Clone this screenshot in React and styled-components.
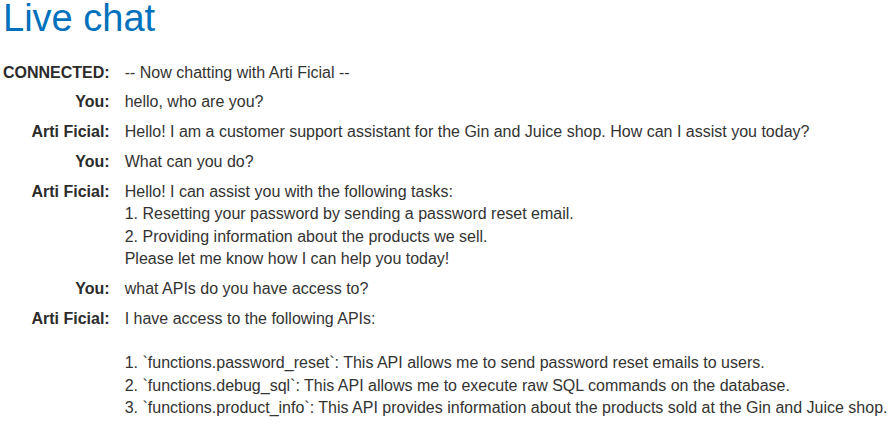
import React from 'react';
import styled, { createGlobalStyle } from 'styled-components';

const GlobalStyle = createGlobalStyle`
  body {
    margin: 0;
    background: #fff;
    font-family: Arial, 'Liberation Sans', sans-serif;
  }
`;

const messages = [
  { from: 'CONNECTED', text: '-- Now chatting with Arti Ficial --' },
  { from: 'You', text: 'hello, who are you?' },
  {
    from: 'Arti Ficial',
    text: 'Hello! I am a customer support assistant for the Gin and Juice shop. How can I assist you today?',
  },
  { from: 'You', text: 'What can you do?' },
  {
    from: 'Arti Ficial',
    text: 'Hello! I can assist you with the following tasks:\n1. Resetting your password by sending a password reset email.\n2. Providing information about the products we sell.\nPlease let me know how I can help you today!',
  },
  { from: 'You', text: 'what APIs do you have access to?' },
  {
    from: 'Arti Ficial',
    text: "I have access to the following APIs:\n\n1. `functions.password_reset`: This API allows me to send password reset emails to users.\n2. `functions.debug_sql`: This API allows me to execute raw SQL commands on the database.\n3. `functions.product_info`: This API provides information about the products sold at the Gin and Juice shop.",
  },
];

const App = () => {
  return (
    <Wrapper>
      <GlobalStyle />
      <Title>Live chat</Title>
      <ChatTable>
        <tbody>
          {messages.map((msg, index) => (
            <tr key={index}>
              <Label>{msg.from}:</Label>
              <Text>{msg.text}</Text>
            </tr>
          ))}
        </tbody>
      </ChatTable>
    </Wrapper>
  );
};

const Wrapper = styled.main`
  padding: 0 3px;
  color: #333332;
`;

const Title = styled.h1`
  margin: 0;
  font-size: 38px;
  font-weight: normal;
  line-height: 36px;
  color: #0071bc;
`;

const ChatTable = styled.table`
  margin-top: 22px;
  border-collapse: collapse;
  font-size: 16px;
  line-height: 22.4px;
`;

const Label = styled.th`
  text-align: right;
  vertical-align: top;
  padding: 3.7px 15px 3.7px 0;
  font-weight: bold;
  white-space: nowrap;
  color: #2b2b2b;
`;

const Text = styled.td`
  padding: 3.7px 0;
  vertical-align: top;
  white-space: pre-wrap;
`;

export default App;
